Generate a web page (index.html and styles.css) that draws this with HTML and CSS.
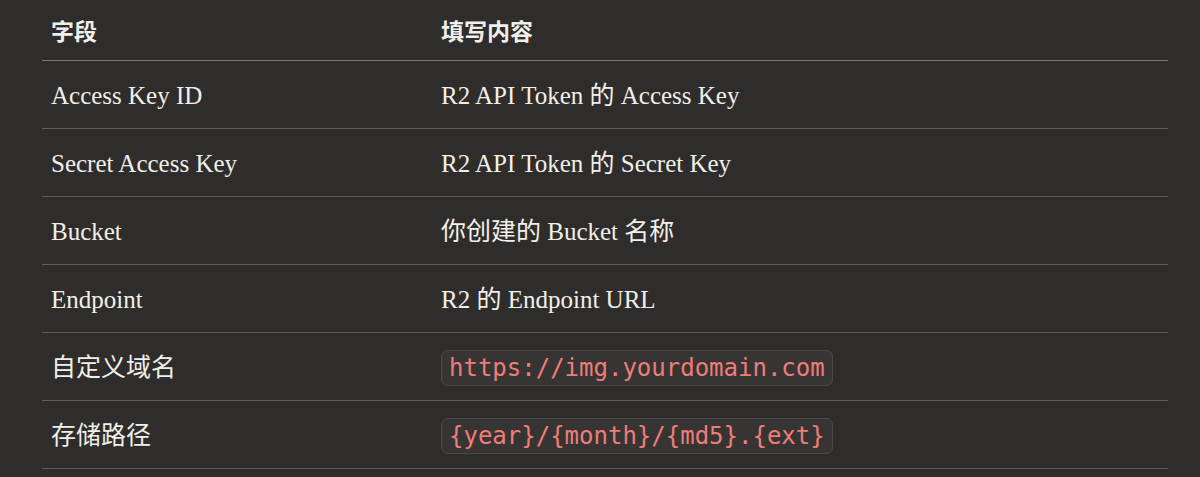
FILE: index.html
```html
<!DOCTYPE html>
<html lang="zh-CN">
<head>
    <meta charset="UTF-8">
    <title>R2 配置</title>
    <link rel="stylesheet" href="styles.css">
</head>
<body>

    <!-- 配置字段表 -->
    <table class="config-table">
        <thead>
            <tr>
                <th class="col-field">字段</th>
                <th>填写内容</th>
            </tr>
        </thead>
        <tbody>
            <tr>
                <td>Access Key ID</td>
                <td>R2 API Token 的 Access Key</td>
            </tr>
            <tr>
                <td>Secret Access Key</td>
                <td>R2 API Token 的 Secret Key</td>
            </tr>
            <tr>
                <td>Bucket</td>
                <td>你创建的 Bucket 名称</td>
            </tr>
            <tr>
                <td>Endpoint</td>
                <td>R2 的 Endpoint URL</td>
            </tr>
            <tr>
                <td>自定义域名</td>
                <td><code>https://img.yourdomain.com</code></td>
            </tr>
            <tr>
                <td>存储路径</td>
                <td><code>{year}/{month}/{md5}.{ext}</code></td>
            </tr>
        </tbody>
    </table>

</body>
</html>
```

FILE: styles.css
```css
body {
    margin: 0;
    padding: 0;
    background-color: #2e2d2b;
    color: #f1efea;
    font-family: "Liberation Serif", "Noto Sans CJK SC", serif;
}

.config-table {
    width: 1126px;
    margin: 0 0 0 42px;
    border-collapse: separate;
    border-spacing: 0;
    text-align: left;
}

.config-table th,
.config-table td {
    padding: 20px 9px 17px;
    line-height: 30px;
    font-size: 25px;
    border-bottom: 1px solid #5f5e5b;
    white-space: nowrap;
}

.config-table th {
    padding: 15px 9px;
    font-family: "Noto Sans CJK SC", sans-serif;
    font-weight: 700;
    font-size: 23px;
    border-bottom-color: #777673;
}

.col-field {
    width: 372px;
}

code {
    font-family: "DejaVu Sans Mono", monospace;
    font-size: 24px;
    color: #f07c7a;
    background-color: #363533;
    border: 1px solid #4a4946;
    border-radius: 7px;
    padding: 3px 7px;
}
```
